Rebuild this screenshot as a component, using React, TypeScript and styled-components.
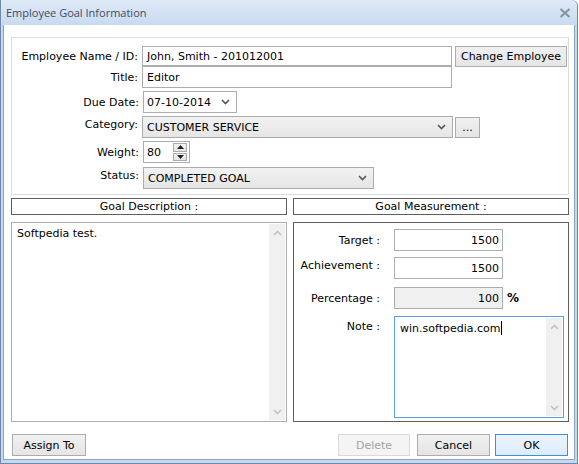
import React from "react";
import styled, { createGlobalStyle, css } from "styled-components";

const GlobalStyle = createGlobalStyle`
  html, body {
    margin: 0;
    padding: 0;
    background: #ffffff;
  }
  body {
    font-family: "DejaVu Sans", Tahoma, sans-serif;
    font-size: 11px;
    color: #000;
  }
  * {
    box-sizing: border-box;
  }
`;

const Window = styled.div`
  width: 578px;
  height: 464px;
  display: flex;
  flex-direction: column;
  border: 1px solid #6f89ab;
  border-top: none;
  border-radius: 0 6px 0 0;
  background: #c6d9f0;
  padding: 0 2px 3px 2px;
`;

const TitleBar = styled.div`
  height: 25px;
  display: flex;
  align-items: center;
  justify-content: space-between;
  margin: 0 -2px;
  padding: 0 6px 0 5px;
  background: linear-gradient(#dfeaf7, #c8daf1);
  border-radius: 0 6px 0 0;
`;

const TitleText = styled.span`
  font-family: "Open Sans", "Liberation Sans", sans-serif;
  font-size: 11px;
  color: #3f4b62;
`;

const Body = styled.div`
  flex: 1;
  background: #ffffff;
  padding: 12px 0 0 7px;
  display: flex;
  flex-direction: column;
  border-left: 1px solid #8aa3c2;
  border-right: 1px solid #8aa3c2;
  border-bottom: 1px solid #8aa3c2;
`;

const InfoPanel = styled.div`
  width: 558px;
  height: 158px;
  border: 1px solid #dcdcdc;
  padding: 8px 0 0 0;
  display: flex;
  flex-direction: column;
`;

const FormRow = styled.div<{ $h: number; $top?: number }>`
  display: flex;
  align-items: center;
  height: ${(p) => p.$h}px;
  margin-top: ${(p) => p.$top ?? 0}px;
`;

const Label = styled.div<{ $w: number; $shift?: number; $gap?: number }>`
  width: ${(p) => p.$w}px;
  text-align: right;
  padding-right: ${(p) => p.$gap ?? 4}px;
  white-space: nowrap;
  position: relative;
  top: ${(p) => p.$shift ?? 0}px;
`;

const fieldBase = css`
  height: 100%;
  border: 1px solid #abadb3;
  background: #fff;
  display: flex;
  align-items: center;
  padding: 0 4px;
  white-space: nowrap;
`;

const TextField = styled.div<{ $w: number; $align?: string; $disabled?: boolean }>`
  ${fieldBase};
  width: ${(p) => p.$w}px;
  justify-content: ${(p) => (p.$align === "right" ? "flex-end" : "flex-start")};
  background: ${(p) => (p.$disabled ? "#f0f0f0" : "#ffffff")};
  padding-right: ${(p) => (p.$align === "right" ? 3 : 4)}px;
`;

const Select = styled.div<{ $w: number; $flat?: boolean }>`
  ${fieldBase};
  width: ${(p) => p.$w}px;
  justify-content: space-between;
  border-color: #acacac;
  background: ${(p) =>
    p.$flat ? "#ffffff" : "linear-gradient(#f2f2f2, #e5e5e5)"};
  padding: 0 6px 0 ${(p) => (p.$flat ? 3 : 4)}px;
`;

const Chevron = () => (
  <svg width="9" height="6" viewBox="0 0 9 6">
    <path d="M1 1 L4.5 4.5 L8 1" fill="none" stroke="#555" strokeWidth="1.6" />
  </svg>
);

const Button = styled.button<{ $w: number; $h?: number; $primary?: boolean }>`
  width: ${(p) => p.$w}px;
  height: ${(p) => p.$h ?? 22}px;
  font-family: inherit;
  font-size: 11px;
  color: #000;
  padding: 0;
  border: 1px solid #acacac;
  background: linear-gradient(#f0f0f0, #e5e5e5);
  ${(p) =>
    p.$primary &&
    css`
      border: 1px solid #3c8ee0;
      background: linear-gradient(#ecf4fc, #dcecfc);
    `}
  &:disabled {
    color: #a3a3a3;
    border-color: #d9d9d9;
    background: #f4f4f4;
  }
`;

const Spinner = styled.div`
  ${fieldBase};
  width: 47px;
  border-color: #acacac;
  padding: 0 1px 0 3px;
  justify-content: space-between;
`;

const SpinButtons = styled.div`
  display: flex;
  flex-direction: column;
  width: 14px;
  height: 18px;
  gap: 1px;
  margin-right: 1px;
`;

const SpinBtn = styled.div`
  flex: 1;
  border: 1px solid #acacac;
  background: linear-gradient(#f4f4f4, #e4e4e4);
  display: flex;
  align-items: center;
  justify-content: center;
`;

const SectionRow = styled.div<{ $top: number; $h: number }>`
  display: flex;
  gap: 6px;
  margin-top: ${(p) => p.$top}px;
  height: ${(p) => p.$h}px;
`;

const Header = styled.div`
  width: 276px;
  border: 1px solid #5e5e5e;
  display: flex;
  align-items: center;
  justify-content: center;
`;

const TextArea = styled.div<{ $w: number; $h: number; $focus?: boolean }>`
  width: ${(p) => p.$w}px;
  height: ${(p) => p.$h}px;
  border: 1px solid ${(p) => (p.$focus ? "#5a9ee2" : "#acacac")};
  display: flex;
  background: #fff;
`;

const AreaText = styled.div`
  flex: 1;
  padding: 4px 5px;
`;

const Caret = styled.span`
  display: inline-block;
  width: 1px;
  height: 14px;
  background: #000;
  vertical-align: -3px;
`;

const ScrollTrack = styled.div`
  width: 16px;
  margin: 1px;
  background: #f0f0f0;
  display: flex;
  flex-direction: column;
  justify-content: space-between;
  align-items: center;
  padding: 6px 0 5px;
`;

const MeasurePanel = styled.div`
  width: 276px;
  border: 1px solid #5e5e5e;
  padding: 6px 0 0 0;
  display: flex;
  flex-direction: column;
`;

const Percent = styled.span`
  font-weight: bold;
  font-size: 12px;
  margin-left: 4px;
`;

const Footer = styled.div`
  display: flex;
  align-items: center;
  margin-top: 12px;
  padding-left: 1px;
`;

const Spacer = styled.div`
  flex: 1;
`;

const FooterGroup = styled.div`
  display: flex;
  gap: 7px;
  margin-right: 6px;
`;

const ArrowUp = ({ color = "#c2c2c2" }: { color?: string }) => (
  <svg width="9" height="6" viewBox="0 0 9 6">
    <path d="M1 5 L4.5 1.5 L8 5" fill="none" stroke={color} strokeWidth="1.6" />
  </svg>
);

const ArrowDown = ({ color = "#c2c2c2" }: { color?: string }) => (
  <svg width="9" height="6" viewBox="0 0 9 6">
    <path d="M1 1 L4.5 4.5 L8 1" fill="none" stroke={color} strokeWidth="1.6" />
  </svg>
);

const Tri = ({ up }: { up?: boolean }) => (
  <svg width="7" height="4" viewBox="0 0 7 4">
    <path d={up ? "M0 4 L3.5 0 L7 4 Z" : "M0 0 L3.5 4 L7 0 Z"} fill="#222" />
  </svg>
);

const Scrollbar = () => (
  <ScrollTrack>
    <ArrowUp />
    <ArrowDown />
  </ScrollTrack>
);

const CloseIcon = () => (
  <svg width="12" height="10" viewBox="0 0 12 10">
    <path d="M1.5 1 L10.5 9 M10.5 1 L1.5 9" stroke="#8592a6" strokeWidth="2" />
  </svg>
);

const App: React.FC = () => {
  return (
    <>
      <GlobalStyle />
      <Window>
        <TitleBar>
          <TitleText>Employee Goal Information</TitleText>
          <CloseIcon />
        </TitleBar>
        <Body>
          <InfoPanel>
            <FormRow $h={20}>
              <Label $w={130}>Employee Name / ID:</Label>
              <TextField $w={310}>John, Smith - 201012001</TextField>
              <Button $w={112} $h={21} style={{ marginLeft: 3, alignSelf: "flex-start" }}>
                Change Employee
              </Button>
            </FormRow>
            <FormRow $h={22}>
              <Label $w={130}>Title:</Label>
              <TextField $w={310}>Editor</TextField>
            </FormRow>
            <FormRow $h={22} $top={3}>
              <Label $w={131}>Due Date:</Label>
              <Select $w={94} $flat>
                <span>07-10-2014</span>
                <Chevron />
              </Select>
            </FormRow>
            <FormRow $h={22} $top={3}>
              <Label $w={130} $shift={-3}>Category:</Label>
              <Select $w={311}>
                <span>CUSTOMER SERVICE</span>
                <Chevron />
              </Select>
              <Button $w={25} $h={21} style={{ marginLeft: 2 }}>
                ...
              </Button>
            </FormRow>
            <FormRow $h={22} $top={3}>
              <Label $w={131}>Weight:</Label>
              <Spinner>
                <span>80</span>
                <SpinButtons>
                  <SpinBtn>
                    <Tri up />
                  </SpinBtn>
                  <SpinBtn>
                    <Tri />
                  </SpinBtn>
                </SpinButtons>
              </Spinner>
            </FormRow>
            <FormRow $h={22} $top={4}>
              <Label $w={131} $shift={-3}>Status:</Label>
              <Select $w={231}>
                <span>COMPLETED GOAL</span>
                <Chevron />
              </Select>
            </FormRow>
          </InfoPanel>

          <SectionRow $top={3} $h={17}>
            <Header>Goal Description :</Header>
            <Header>Goal Measurement :</Header>
          </SectionRow>

          <SectionRow $top={7} $h={200}>
            <TextArea $w={276} $h={200}>
              <AreaText>Softpedia test.</AreaText>
              <Scrollbar />
            </TextArea>
            <MeasurePanel>
              <FormRow $h={22}>
                <Label $w={100} $gap={14}>Target :</Label>
                <TextField $w={109} $align="right">1500</TextField>
              </FormRow>
              <FormRow $h={22} $top={6}>
                <Label $w={100} $gap={14} $shift={-3}>Achievement :</Label>
                <TextField $w={109} $align="right">1500</TextField>
              </FormRow>
              <FormRow $h={22} $top={8}>
                <Label $w={100} $gap={14}>Percentage :</Label>
                <TextField $w={109} $align="right" $disabled>
                  100
                </TextField>
                <Percent>%</Percent>
              </FormRow>
              <FormRow $h={102} $top={7} style={{ alignItems: "flex-start" }}>
                <Label $w={100} $gap={14} $shift={4}>Note :</Label>
                <TextArea $w={170} $h={102} $focus>
                  <AreaText>
                    win.softpedia.com
                    <Caret />
                  </AreaText>
                  <Scrollbar />
                </TextArea>
              </FormRow>
            </MeasurePanel>
          </SectionRow>

          <Footer>
            <Button $w={74}>Assign To</Button>
            <Spacer />
            <FooterGroup>
              <Button $w={72} disabled>
                Delete
              </Button>
              <Button $w={73}>Cancel</Button>
              <Button $w={73} $primary style={{ marginLeft: -2 }}>
                OK
              </Button>
            </FooterGroup>
          </Footer>
        </Body>
      </Window>
    </>
  );
};

export default App;
